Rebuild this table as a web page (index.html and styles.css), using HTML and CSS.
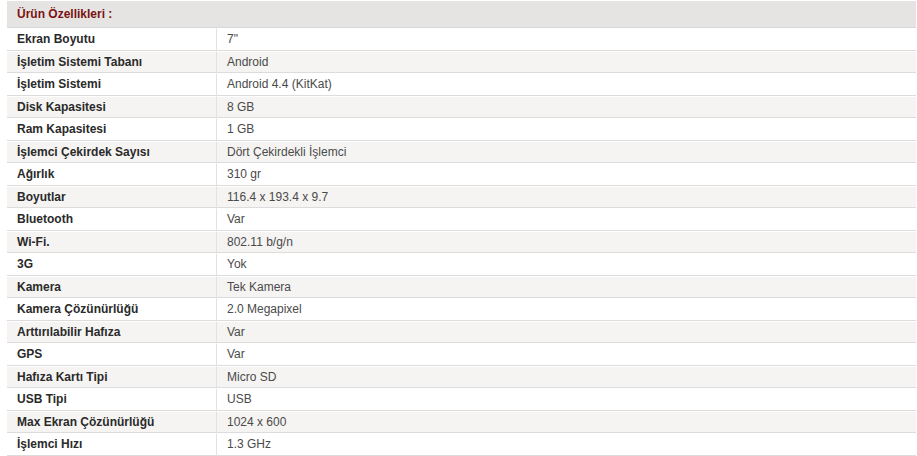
FILE: index.html
```html
<!DOCTYPE html>
<html lang="tr">
<head>
<meta charset="utf-8">
<link rel="stylesheet" href="styles.css">
</head>
<body>
<div class="specs">
  <div class="specs-head">Ürün Özellikleri :</div>
  <table class="spec-table">
    <tbody>
      <tr><td class="k">Ekran Boyutu</td><td class="v">7"</td></tr>
      <tr><td class="k">İşletim Sistemi Tabanı</td><td class="v">Android</td></tr>
      <tr><td class="k">İşletim Sistemi</td><td class="v">Android 4.4 (KitKat)</td></tr>
      <tr><td class="k">Disk Kapasitesi</td><td class="v">8 GB</td></tr>
      <tr><td class="k">Ram Kapasitesi</td><td class="v">1 GB</td></tr>
      <tr><td class="k">İşlemci Çekirdek Sayısı</td><td class="v">Dört Çekirdekli İşlemci</td></tr>
      <tr><td class="k">Ağırlık</td><td class="v">310 gr</td></tr>
      <tr><td class="k">Boyutlar</td><td class="v">116.4 x 193.4 x 9.7</td></tr>
      <tr><td class="k">Bluetooth</td><td class="v">Var</td></tr>
      <tr><td class="k">Wi-Fi.</td><td class="v">802.11 b/g/n</td></tr>
      <tr><td class="k">3G</td><td class="v">Yok</td></tr>
      <tr><td class="k">Kamera</td><td class="v">Tek Kamera</td></tr>
      <tr><td class="k">Kamera Çözünürlüğü</td><td class="v">2.0 Megapixel</td></tr>
      <tr><td class="k">Arttırılabilir Hafıza</td><td class="v">Var</td></tr>
      <tr><td class="k">GPS</td><td class="v">Var</td></tr>
      <tr><td class="k">Hafıza Kartı Tipi</td><td class="v">Micro SD</td></tr>
      <tr><td class="k">USB Tipi</td><td class="v">USB</td></tr>
      <tr><td class="k">Max Ekran Çözünürlüğü</td><td class="v">1024 x 600</td></tr>
      <tr><td class="k">İşlemci Hızı</td><td class="v">1.3 GHz</td></tr>
    </tbody>
  </table>
</div>
</body>
</html>
```
FILE: styles.css
```css
html, body {
  margin: 0;
  padding: 0;
  background: #fff;
}
body {
  font-family: "Liberation Sans", Arial, sans-serif;
  font-size: 12px;
}
.specs {
  margin: 1px 1px 0 7px;
  width: 909px;
}
.specs-head {
  background: #e5e4e2;
  border-bottom: 1px solid #d8d8d8;
  height: 26px;
  line-height: 26px;
  padding-left: 10px;
  font-weight: bold;
  color: #7a1212;
}
.spec-table {
  width: 100%;
  border-collapse: separate;
  border-spacing: 0;
}
.spec-table td {
  border-top: 1px solid #fff;
  border-bottom: 1px solid #dcdcdc;
  padding: 3px 10px;
  line-height: 14.5px;
  vertical-align: middle;
}
.spec-table tr:nth-child(even) td {
  background: #f5f4f2;
}
.spec-table .k {
  width: 189px;
  font-weight: bold;
  color: #2a2a2a;
}
.spec-table .v {
  border-left: 1px solid #e2e2e2;
  color: #4a4a4a;
}
```
